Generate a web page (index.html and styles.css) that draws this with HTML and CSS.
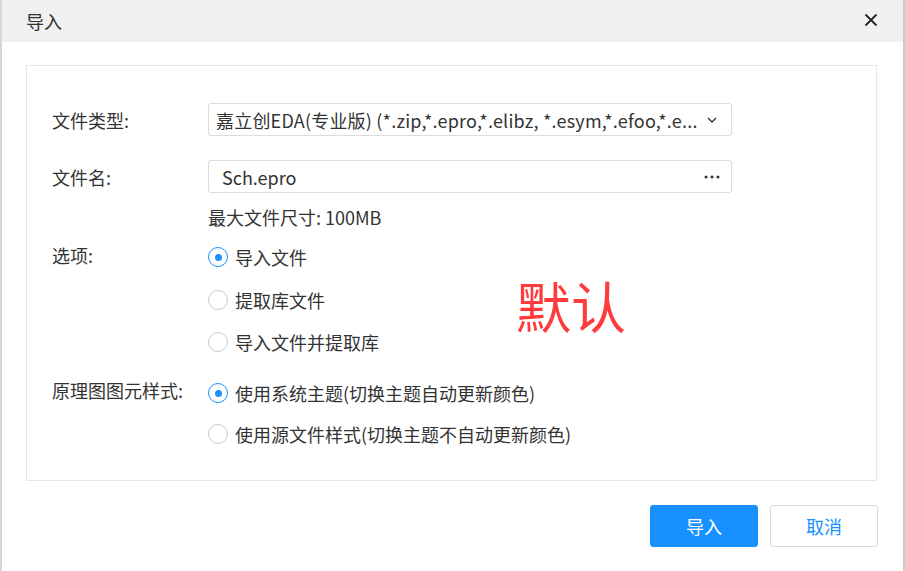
FILE: index.html
```html
<!DOCTYPE html>
<html lang="zh-CN">
<head>
<meta charset="utf-8">
<title>导入</title>
<link rel="stylesheet" href="styles.css">
</head>
<body>
<div class="dialog">
  <div class="titlebar">
    <span class="title">导入</span>
    <svg class="close" width="14" height="14" viewBox="0 0 14 14"><path d="M1.5 1.5 L12.5 12.5 M12.5 1.5 L1.5 12.5" stroke="#222" stroke-width="1.8" fill="none"/></svg>
  </div>
  <div class="content">
    <div class="panel">
      <div class="row">
        <div class="label">文件类型:</div>
        <div class="select">
          <span class="select-text">嘉立创EDA(专业版) (*.zip,*.epro,*.elibz, *.esym,*.efoo,*.e...</span>
          <svg class="chev" width="10" height="6" viewBox="0 0 10 6"><path d="M1 1 L5 5 L9 1" stroke="#333" stroke-width="1.3" fill="none"/></svg>
        </div>
      </div>
      <div class="row row-file">
        <div class="label">文件名:</div>
        <div class="input">
          <span class="input-text">Sch.epro</span>
          <svg class="dots" width="16" height="4" viewBox="0 0 16 4"><circle cx="2" cy="2" r="1.5" fill="#333"/><circle cx="8" cy="2" r="1.5" fill="#333"/><circle cx="14" cy="2" r="1.5" fill="#333"/></svg>
        </div>
      </div>
      <div class="hint">最大文件尺寸: 100MB</div>
      <div class="group group-opts">
        <div class="label glabel">选项:</div>
        <div class="radios">
          <div class="radio checked"><span class="dot"></span>导入文件</div>
          <div class="radio"><span class="dot"></span>提取库文件</div>
          <div class="radio"><span class="dot"></span>导入文件并提取库</div>
        </div>
      </div>
      <div class="group group-style">
        <div class="label glabel">原理图图元样式:</div>
        <div class="radios">
          <div class="radio checked"><span class="dot"></span>使用系统主题(切换主题自动更新颜色)</div>
          <div class="radio"><span class="dot"></span>使用源文件样式(切换主题不自动更新颜色)</div>
        </div>
      </div>
      <div class="stamp">默认</div>
    </div>
    <div class="footer">
      <button class="btn btn-primary">导入</button>
      <button class="btn btn-default">取消</button>
    </div>
  </div>
</div>
</body>
</html>
```

FILE: styles.css
```css
* { box-sizing: border-box; }
html, body {
  margin: 0;
  padding: 0;
  background: #fff;
}
body {
  font-family: "Noto Sans CJK SC", "Noto Sans", sans-serif;
  font-size: 18px;
  color: #333;
  width: 905px;
  height: 571px;
  overflow: hidden;
}
.dialog {
  width: 905px;
  height: 571px;
  border-left: 2px solid #d6d6d6;
  border-right: 2px solid #c9c9c9;
  background: #fff;
}
.titlebar {
  height: 42px;
  background: #f0f0f0;
  display: flex;
  align-items: center;
  justify-content: space-between;
  padding: 0 25px 0 24px;
}
.title {
  font-size: 18px;
  color: #333;
  line-height: 42px;
}
.close { display: block; margin-top: -2px; }
.content {
  padding: 23px 26px 0 24px;
}
.panel {
  position: relative;
  height: 416px;
  border: 1px solid #e6e6e6;
  padding: 37px 0 0 25px;
}
.row {
  display: flex;
  align-items: center;
}
.row-file { margin-top: 24px; }
.label {
  width: 156px;
  flex: none;
  font-size: 18px;
  color: #333;
}
.select, .input {
  width: 524px;
  height: 33px;
  border: 1px solid #dcdcdc;
  border-radius: 3px;
  display: flex;
  align-items: center;
  justify-content: space-between;
  font-size: 18px;
  color: #333;
  white-space: nowrap;
  overflow: hidden;
}
.select { padding: 0 14px 0 7px; }
.input { padding: 0 11px 0 13px; }
.select-text { overflow: hidden; letter-spacing: 0.2px; }
.chev { flex: none; margin-left: 6px; }
.dots { flex: none; display: block; }
.hint {
  margin: 12px 0 0 156px;
  line-height: 24px;
  font-size: 18px;
  color: #333;
}
.group {
  display: flex;
  align-items: flex-start;
}
.group-opts { margin-top: 7px; }
.group-style { margin-top: 9px; }
.glabel { line-height: 38px; }
.group-style .glabel { line-height: 35px; }
.radio {
  display: flex;
  align-items: center;
  height: 42.5px;
  font-size: 18px;
  color: #333;
}
.group-style .radio { height: 41px; }
.dot {
  width: 20px;
  height: 20px;
  border-radius: 50%;
  border: 1px solid #c9c9c9;
  margin-right: 7px;
  flex: none;
  position: relative;
  background: #fff;
}
.checked .dot { border-color: #1890ff; }
.checked .dot::after {
  content: "";
  position: absolute;
  left: 5.5px;
  top: 5.5px;
  width: 7px;
  height: 7px;
  border-radius: 50%;
  background: #1890ff;
}
.stamp {
  position: absolute;
  left: 489px;
  top: 200px;
  font-size: 55px;
  line-height: 76px;
  color: #ff3b3b;
}
.footer {
  display: flex;
  justify-content: flex-end;
  gap: 12px;
  padding-top: 24px;
  margin-right: -1px;
}
.btn {
  width: 108px;
  height: 42px;
  border-radius: 3px;
  font-family: inherit;
  font-size: 18px;
  padding: 0;
  cursor: pointer;
}
.btn-primary {
  background: #1890ff;
  border: 1px solid #1890ff;
  color: #fff;
}
.btn-default {
  background: #fff;
  border: 1px solid #d9d9d9;
  color: #1890ff;
}
```
